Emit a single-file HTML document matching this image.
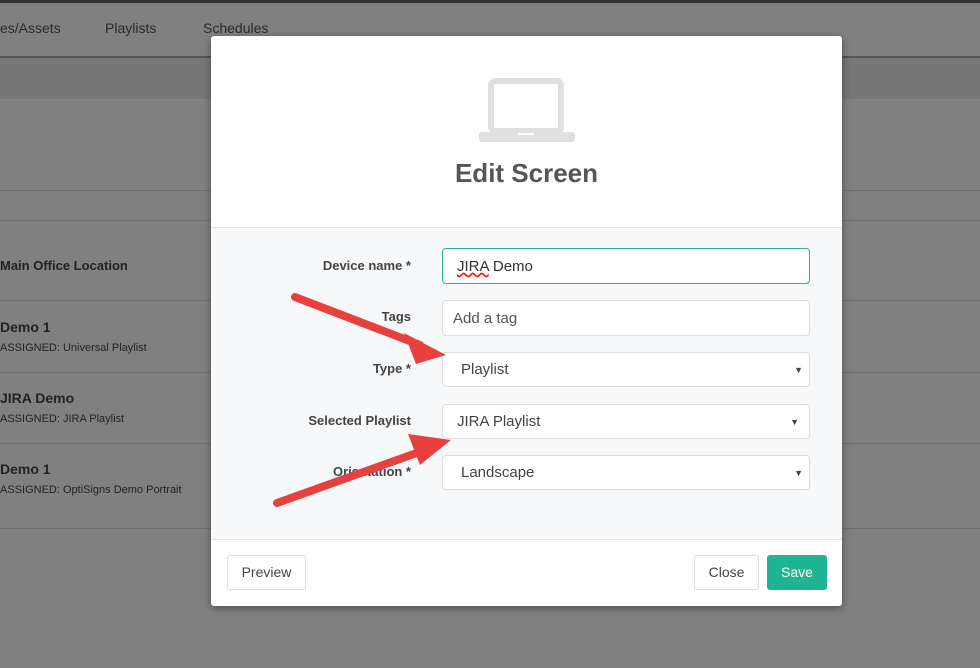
<!DOCTYPE html><html><head><style>
body{margin:0;width:980px;height:668px;background:#808080;font-family:"Liberation Sans",sans-serif;position:relative;overflow:hidden}
.a{position:absolute}
.t{color:#333;font-size:14px}
.lb{position:absolute;right:569px;font-weight:bold;font-size:13px;color:#444;text-align:right;white-space:nowrap}
.in{position:absolute;left:442px;width:368px;height:35px;border:1px solid #ddd;border-radius:4px;background:#fff;font-size:15px;color:#444;box-sizing:border-box;line-height:34px;padding-left:14px}
</style></head><body>
<div class="a" style="left:0;top:0;width:980px;height:3px;background:#333"></div>
<div class="a" style="left:0;top:3px;width:980px;height:53px;background:#808080;border-bottom:2px solid #555"></div>
<div class="a t" style="left:0;top:20px;color:#2a2a2a">es/Assets</div>
<div class="a t" style="left:105px;top:20px;color:#2a2a2a">Playlists</div>
<div class="a t" style="left:203px;top:20px;color:#2a2a2a">Schedules</div>
<div class="a" style="left:0;top:58px;width:980px;height:41px;background:#777"></div>
<div class="a" style="left:0;top:190px;width:980px;height:1px;background:#707070"></div>
<div class="a" style="left:0;top:220px;width:980px;height:1px;background:#707070"></div>
<div class="a" style="left:0;top:300px;width:980px;height:1px;background:#707070"></div>
<div class="a" style="left:0;top:372px;width:980px;height:1px;background:#707070"></div>
<div class="a" style="left:0;top:443px;width:980px;height:1px;background:#707070"></div>
<div class="a" style="left:0;top:528px;width:980px;height:1px;background:#707070"></div>
<div class="a" style="left:0;top:258px;font-weight:bold;font-size:13px;color:#222">Main Office Location</div>
<div class="a" style="left:0;top:319px;font-weight:bold;font-size:14px;color:#222">Demo 1</div>
<div class="a" style="left:0;top:342px;font-size:11px;color:#222">ASSIGNED: Universal Playlist</div>
<div class="a" style="left:0;top:390px;font-weight:bold;font-size:14px;color:#222">JIRA Demo</div>
<div class="a" style="left:0;top:413px;font-size:11px;color:#222">ASSIGNED: JIRA Playlist</div>
<div class="a" style="left:0;top:461px;font-weight:bold;font-size:14px;color:#222">Demo 1</div>
<div class="a" style="left:0;top:484px;font-size:11px;color:#222">ASSIGNED: OptiSigns Demo Portrait</div>

<div class="a" style="left:211px;top:36px;width:631px;height:570px;background:#fff;border-radius:3px;box-shadow:0 2px 8px rgba(0,0,0,.4);overflow:hidden">
<div class="a" style="left:0;top:191px;width:631px;height:311px;background:#f7f8fa;border-top:1px solid #e5e5e5;border-bottom:1px solid #e5e5e5"></div>
</div>
<svg class="a" style="left:478px;top:78px" width="98" height="66"><rect x="13" y="3" width="70" height="50" rx="4" fill="none" stroke="#e0e0e0" stroke-width="6"/><rect x="1" y="54" width="96" height="10" rx="3" fill="#e0e0e0"/><rect x="40" y="55" width="16" height="2" fill="#fff"/></svg>
<div class="a" style="left:211px;top:158px;width:631px;text-align:center;font-size:26px;font-weight:bold;color:#555">Edit Screen</div>

<div class="lb" style="top:258px">Device name *</div>
<div class="in" style="top:248px;height:36px;border-color:#2bb39a;padding-left:14px;line-height:36px;color:#333"><span style="text-decoration:underline wavy red">JIRA</span> Demo</div>
<div class="lb" style="top:309px">Tags</div>
<div class="in" style="top:300px;height:36px;line-height:36px;padding-left:10px;color:#555">Add a tag</div>
<div class="lb" style="top:361px">Type *</div>
<div class="in" style="top:352px;padding-left:18px">Playlist<span style="position:absolute;right:6px;font-size:9px">▼</span></div>
<div class="lb" style="top:413px">Selected Playlist</div>
<div class="in" style="top:404px">JIRA Playlist<span style="position:absolute;right:10px;font-size:9px">▼</span></div>
<div class="lb" style="top:464px">Orientation *</div>
<div class="in" style="top:455px;padding-left:18px">Landscape<span style="position:absolute;right:6px;font-size:9px">▼</span></div>

<svg class="a" style="left:0;top:0" width="980" height="668">
<g stroke="#e8403f" stroke-width="8" stroke-linecap="round" fill="#e8403f">
<line x1="295" y1="297" x2="420" y2="345"/>
<line x1="277" y1="503" x2="425" y2="450"/>
</g>
<polygon points="446,355 404,333 416,364" fill="#e8403f"/>
<polygon points="451,440 408,434 420,465" fill="#e8403f"/>
</svg>

<div class="a" style="left:227px;top:555px;width:79px;height:35px;border:1px solid #ddd;border-radius:3px;background:#fff;box-sizing:border-box;text-align:center;line-height:33px;font-size:14px;color:#444">Preview</div>
<div class="a" style="left:694px;top:555px;width:65px;height:35px;border:1px solid #ddd;border-radius:3px;background:#fff;box-sizing:border-box;text-align:center;line-height:33px;font-size:14px;color:#444">Close</div>
<div class="a" style="left:767px;top:555px;width:60px;height:35px;border-radius:3px;background:#1fb594;text-align:center;line-height:35px;font-size:14px;color:#fff">Save</div>
</body></html>
